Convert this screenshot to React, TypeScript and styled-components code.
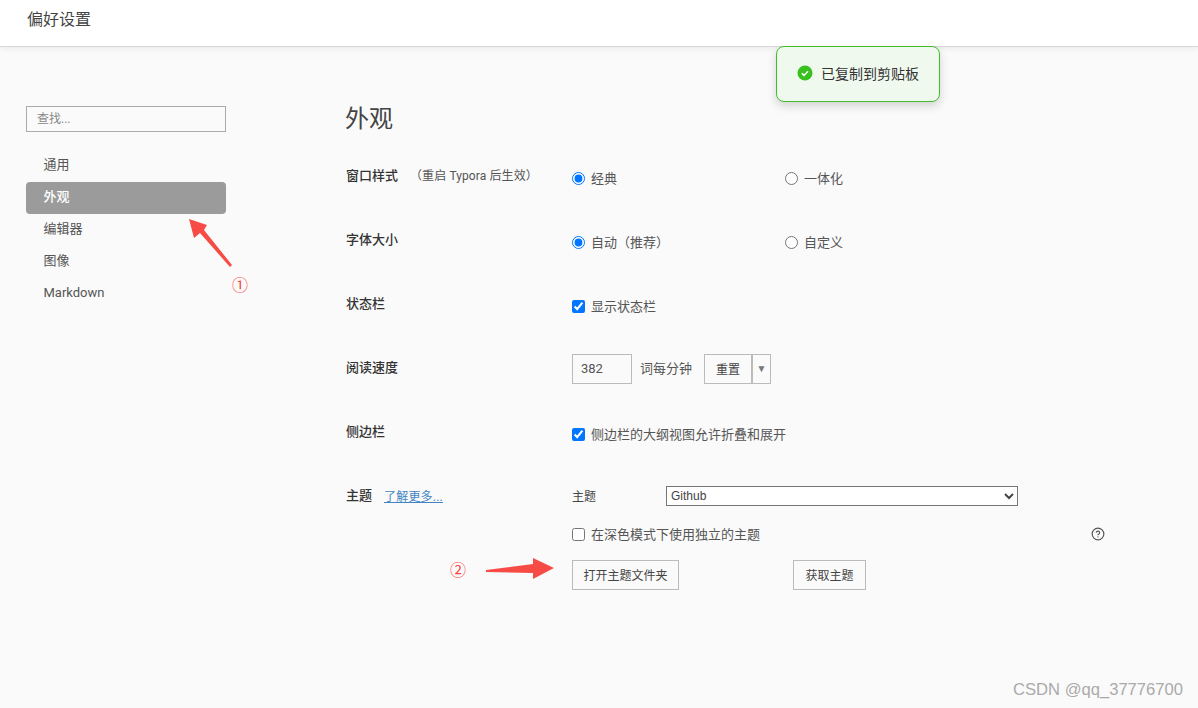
import React from 'react';
import styled, { createGlobalStyle } from 'styled-components';

const GlobalStyle = createGlobalStyle`
  html, body {
    margin: 0;
    padding: 0;
    background: #fafafa;
    overflow: hidden;
  }
  body {
    font-family: Roboto, "Noto Sans CJK SC", sans-serif;
    font-size: 13px;
    color: #444;
  }
`;

const Page = styled.div`
  position: relative;
  width: 1198px;
  height: 708px;
  overflow: hidden;
`;

const TitleBar = styled.header`
  height: 47px;
  box-sizing: border-box;
  padding: 8px 0 0 27px;
  background: #fff;
  border-bottom: 1px solid #d8d8d8;
  box-shadow: 0 1px 6px rgba(0, 0, 0, 0.08);
  font-size: 16px;
  line-height: 24px;
  color: #444;
`;

const Body = styled.div`
  display: flex;
  padding-left: 26px;
`;

const Sidebar = styled.nav`
  width: 200px;
  margin-right: 120px;
  padding-top: 59px;
`;

const Search = styled.input`
  display: block;
  width: 100%;
  height: 26px;
  box-sizing: border-box;
  margin-bottom: 18px;
  padding: 0 10px;
  border: 1px solid #aaa;
  border-radius: 0;
  background: #fafafa;
  font: 12px Roboto, "Noto Sans CJK SC", sans-serif;
  outline: none;
  &::placeholder {
    color: #888;
    opacity: 1;
  }
`;

const NavItem = styled.div<{ $active?: boolean }>`
  height: 32px;
  padding-left: 17.5px;
  border-radius: 4px;
  line-height: 30px;
  font-size: 13px;
  background: ${props => (props.$active ? '#9b9b9b' : 'transparent')};
  color: ${props => (props.$active ? '#fff' : '#555')};
  font-weight: ${props => (props.$active ? 500 : 400)};
`;

const Main = styled.main`
  padding-top: 56px;
`;

const Heading = styled.h1`
  margin: 0 0 31px -1px;
  font-size: 24px;
  line-height: 32px;
  font-weight: 400;
  color: #444;
`;

const Row = styled.section`
  display: flex;
  min-height: 64px;
`;

const RowLabel = styled.div`
  display: flex;
  align-items: baseline;
  width: 226px;
  height: 20px;
  line-height: 20px;
  font-weight: 500;
  color: #333;
`;

const Hint = styled.span`
  margin-left: 12px;
  font-size: 12px;
  font-weight: 400;
  letter-spacing: 0.1px;
  color: #555;
`;

const LearnMore = styled.a`
  position: relative;
  top: 1px;
  margin-left: 12px;
  font-size: 12px;
  font-weight: 400;
  letter-spacing: 0.2px;
  color: #4183c4;
  text-decoration: underline;
`;

const Controls = styled.div`
  display: flex;
  align-items: center;
  height: 22px;
`;

const Option = styled.label`
  display: flex;
  align-items: center;
  width: 213px;
  color: #555;
`;

const Radio = styled.input.attrs({ type: 'radio' })`
  width: 13px;
  height: 13px;
  margin: 2px 6px 0 0;
  flex: none;
`;

const Check = styled.input.attrs({ type: 'checkbox' })`
  width: 13px;
  height: 13px;
  margin: 2px 6px 0 0;
  flex: none;
`;

const CheckLabel = styled.label`
  display: flex;
  align-items: center;
  color: #555;
`;

const SpeedRow = styled.div`
  display: flex;
  align-items: center;
  height: 30px;
`;

const NumberBox = styled.input`
  width: 60px;
  height: 30px;
  box-sizing: border-box;
  padding: 0 8px 1px;
  border: 1px solid #bbb;
  border-radius: 0;
  background: #fafafa;
  color: #555;
  font: 13px Roboto, "Noto Sans CJK SC", sans-serif;
  outline: none;
`;

const Unit = styled.span`
  margin: -3px 12px 0 8px;
  color: #555;
`;

const Button = styled.button<{ $width: number }>`
  width: ${props => props.$width}px;
  height: 30px;
  box-sizing: border-box;
  padding: 0 0 2px;
  border: 1px solid #bbb;
  border-radius: 0;
  background: #fafafa;
  color: #444;
  font: 12px Roboto, "Noto Sans CJK SC", sans-serif;
`;

const Caret = styled.button`
  width: 19px;
  height: 30px;
  box-sizing: border-box;
  padding: 0;
  border: 1px solid #bbb;
  border-radius: 0;
  background: #fafafa;
  color: #777;
  font-size: 10px;
  line-height: 28px;
`;

const ThemeColumn = styled.div`
  display: flex;
  flex-direction: column;
  width: 533px;
`;

const ThemeLine = styled.div`
  display: flex;
  align-items: center;
  height: 20px;
`;

const ThemeName = styled.span`
  width: 94px;
  margin-top: -1px;
  font-size: 12px;
  color: #444;
`;

const ThemeSelect = styled.select`
  width: 352px;
  height: 20px;
  box-sizing: border-box;
  padding: 0;
  border: 1px solid #767676;
  border-radius: 0;
  background: #fff;
  color: #444;
  font: 12px "Liberation Sans", Arial, sans-serif;
`;

const DarkLine = styled.div`
  display: flex;
  align-items: center;
  justify-content: space-between;
  height: 22px;
  margin-top: 16px;
`;

const HelpIcon = styled.svg`
  display: block;
  width: 14px;
  height: 14px;
  margin-top: 2px;
  color: #555;
`;

const ButtonLine = styled.div`
  display: flex;
  gap: 114px;
  margin-top: 16px;
`;

const Toast = styled.div`
  position: absolute;
  left: 776px;
  top: 46px;
  display: flex;
  align-items: center;
  gap: 8px;
  width: 164px;
  height: 56px;
  box-sizing: border-box;
  padding: 0 0 3px 20px;
  border: 1px solid #3fc02a;
  border-radius: 8px;
  background: #eff9ee;
  box-shadow: 0 4px 10px rgba(0, 0, 0, 0.16);
  font-size: 14px;
  color: #333;
`;

const Mark = styled.svg`
  position: absolute;
  left: 0;
  top: 0;
  pointer-events: none;
`;

const Circled = styled.span<{ $x: number; $y: number }>`
  position: absolute;
  left: ${props => props.$x}px;
  top: ${props => props.$y}px;
  font-size: 16px;
  line-height: 20px;
  color: #f44;
`;

const Watermark = styled.div`
  position: absolute;
  right: 15px;
  bottom: 8px;
  font: 16.6px "Liberation Sans", Arial, sans-serif;
  line-height: 20px;
  color: #aaa;
`;

const App: React.FC = () => {
  return (
    <Page>
      <GlobalStyle />
      <TitleBar>偏好设置</TitleBar>
      <Body>
        <Sidebar>
          <Search placeholder="查找..." />
          <NavItem>通用</NavItem>
          <NavItem $active>外观</NavItem>
          <NavItem>编辑器</NavItem>
          <NavItem>图像</NavItem>
          <NavItem>Markdown</NavItem>
        </Sidebar>
        <Main>
          <Heading>外观</Heading>
          <Row>
            <RowLabel>
              窗口样式<Hint>（重启 Typora 后生效）</Hint>
            </RowLabel>
            <Controls>
              <Option><Radio name="win" defaultChecked />经典</Option>
              <Option><Radio name="win" />一体化</Option>
            </Controls>
          </Row>
          <Row>
            <RowLabel>字体大小</RowLabel>
            <Controls>
              <Option><Radio name="size" defaultChecked />自动（推荐）</Option>
              <Option><Radio name="size" />自定义</Option>
            </Controls>
          </Row>
          <Row>
            <RowLabel>状态栏</RowLabel>
            <Controls>
              <CheckLabel><Check defaultChecked />显示状态栏</CheckLabel>
            </Controls>
          </Row>
          <Row>
            <RowLabel>阅读速度</RowLabel>
            <Controls>
              <SpeedRow>
                <NumberBox defaultValue="382" />
                <Unit>词每分钟</Unit>
                <Button $width={48}>重置</Button>
                <Caret>▼</Caret>
              </SpeedRow>
            </Controls>
          </Row>
          <Row>
            <RowLabel>侧边栏</RowLabel>
            <Controls>
              <CheckLabel><Check defaultChecked />侧边栏的大纲视图允许折叠和展开</CheckLabel>
            </Controls>
          </Row>
          <Row>
            <RowLabel>
              主题<LearnMore>了解更多...</LearnMore>
            </RowLabel>
            <ThemeColumn>
              <ThemeLine>
                <ThemeName>主题</ThemeName>
                <ThemeSelect defaultValue="Github">
                  <option>Github</option>
                </ThemeSelect>
              </ThemeLine>
              <DarkLine>
                <CheckLabel><Check />在深色模式下使用独立的主题</CheckLabel>
                <HelpIcon viewBox="0 0 24 24" fill="none" stroke="currentColor" strokeWidth="2" strokeLinecap="round" strokeLinejoin="round">
                  <circle cx="12" cy="12" r="10" />
                  <path d="M9.1 9a3 3 0 0 1 5.8 1c0 2-3 3-3 3" />
                  <path d="M12 17h.01" />
                </HelpIcon>
              </DarkLine>
              <ButtonLine>
                <Button $width={107}>打开主题文件夹</Button>
                <Button $width={73}>获取主题</Button>
              </ButtonLine>
            </ThemeColumn>
          </Row>
        </Main>
      </Body>
      <Toast>
        <svg width="16" height="16" viewBox="0 0 16 16">
          <circle cx="8" cy="8" r="7.5" fill="#38c01f" />
          <path d="M4.8 8.2l2.2 2.2 4-4.2" fill="none" stroke="#fff" strokeWidth="1.5" />
        </svg>
        已复制到剪贴板
      </Toast>
      <Mark width="1198" height="708" viewBox="0 0 1198 708">
        <polygon points="189,219 207,225 204,230 232,265 230,267 200,233 194,238" fill="#f74c46" />
        <polygon points="486,570 533,564 533,558 554,568 533,579 533,573 486,572" fill="#f74c46" />
      </Mark>
      <Circled $x={232} $y={276}>①</Circled>
      <Circled $x={450} $y={561}>②</Circled>
      <Watermark>CSDN @qq_37776700</Watermark>
    </Page>
  );
};

export default App;
